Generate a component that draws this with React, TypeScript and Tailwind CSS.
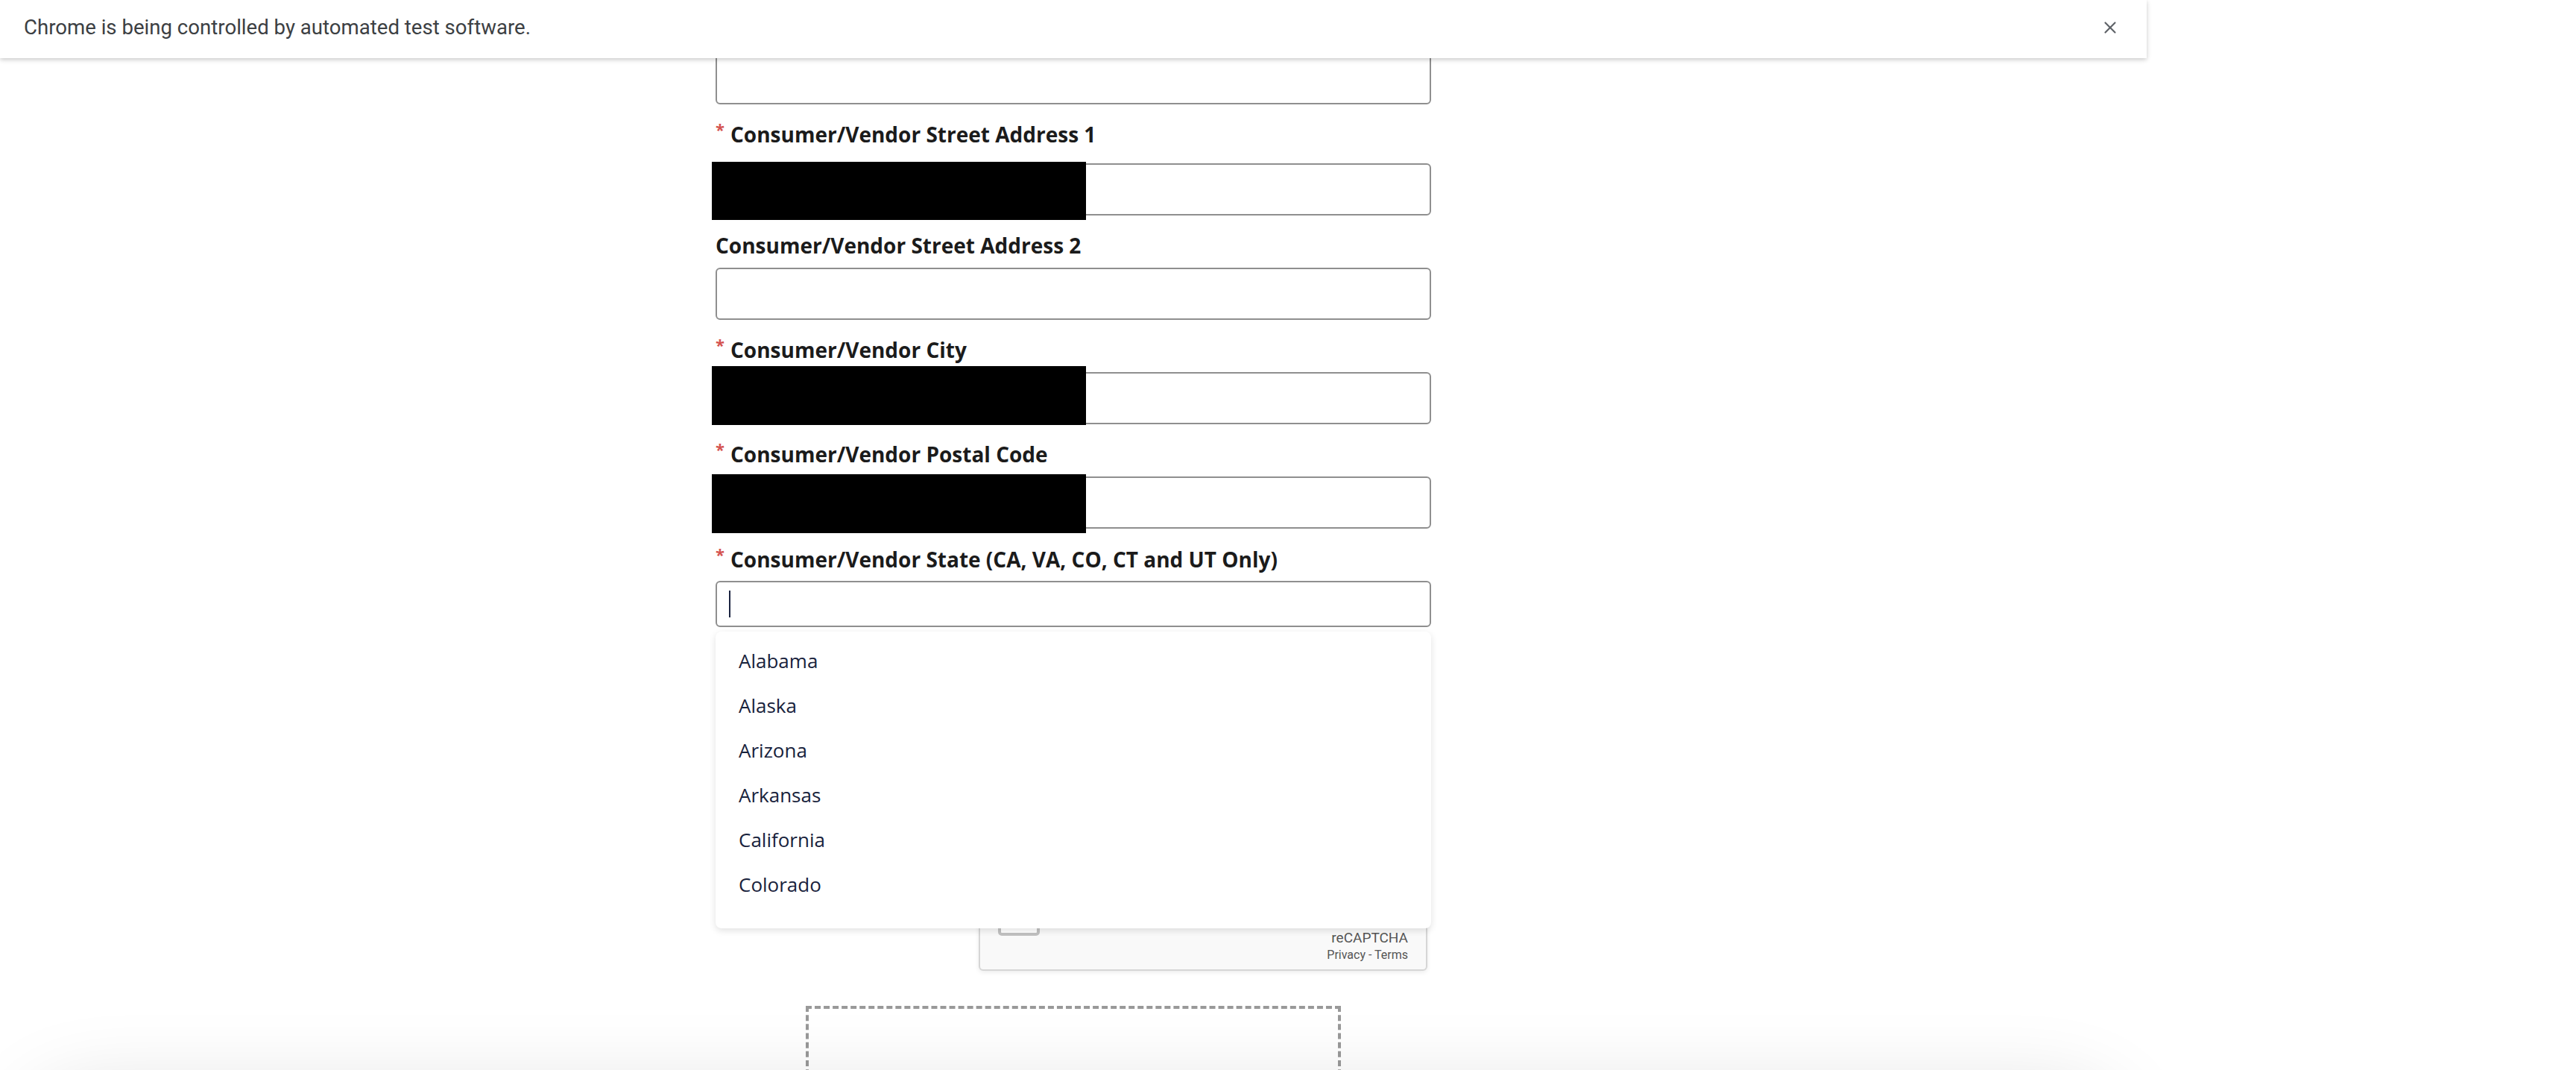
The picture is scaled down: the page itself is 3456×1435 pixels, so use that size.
import React from 'react';
import { X } from 'lucide-react';

const STATES = ['Alabama', 'Alaska', 'Arizona', 'Arkansas', 'California', 'Colorado'];

const labelCls =
  "flex items-start h-[36px] text-[28px] font-bold text-[#1b1b1b] whitespace-nowrap font-['Open_Sans',sans-serif]";
const inputCls = 'block w-full h-[70px] rounded-[6px] border-2 border-[#8f8f8f] bg-white outline-none';

const Star = () => (
  <span className="leading-[22px] text-[22px] text-[#d4534f] mr-[8px]">*</span>
);

// black box used to hide prefilled values
const Redacted = ({ top, height }: { top: string; height: string }) => (
  <div className={`absolute left-[-5px] w-[502px] bg-black ${top} ${height}`} />
);

const App: React.FC = () => {
  return (
    <div className="relative w-[3456px] h-[1435px] overflow-hidden bg-white">
      <div className="relative w-[2880px] h-[1435px]">
        {/* Automation info bar */}
        <div className="absolute top-0 left-0 z-30 w-[2880px] h-[78px] bg-white shadow-[0_2px_6px_rgba(0,0,0,0.22)] flex items-center justify-between pl-[32px] pr-[36px] pb-[5px]">
          <span className="text-[27.6px] text-[#3c4043] font-['Roboto',sans-serif]">
            Chrome is being controlled by automated test software.
          </span>
          <X size={26} strokeWidth={2} className="text-[#5f6368]" />
        </div>

        {/* Form column */}
        <div className="mx-auto w-[960px] pt-[70px]">
          <input className={inputCls} />

          <label className={`${labelCls} mt-[22px]`}>
            <Star />
            <span className="leading-[36px]">Consumer/Vendor Street Address 1</span>
          </label>
          <div className="relative mt-[21px]">
            <input className={inputCls} />
            <Redacted top="top-[-2px]" height="h-[78px]" />
          </div>

          <label className={`${labelCls} mt-[22px]`}>
            <span className="leading-[36px]">Consumer/Vendor Street Address 2</span>
          </label>
          <input className={`${inputCls} mt-[12px]`} />

          <label className={`${labelCls} mt-[22px]`}>
            <Star />
            <span className="leading-[36px]">Consumer/Vendor City</span>
          </label>
          <div className="relative mt-[12px]">
            <input className={inputCls} />
            <Redacted top="top-[-8px]" height="h-[79px]" />
          </div>

          <label className={`${labelCls} mt-[22px]`}>
            <Star />
            <span className="leading-[36px]">Consumer/Vendor Postal Code</span>
          </label>
          <div className="relative mt-[12px]">
            <input className={inputCls} />
            <Redacted top="top-[-3px]" height="h-[79px]" />
          </div>

          <label className={`${labelCls} mt-[23px]`}>
            <Star />
            <span className="leading-[36px]">Consumer/Vendor State (CA, VA, CO, CT and UT Only)</span>
          </label>
          <div className="relative mt-[11px]">
            <div className="h-[62px] rounded-[6px] border-2 border-[#8f8f8f] bg-white">
              <div className="ml-[16px] mt-[11px] w-[2px] h-[36px] bg-[#1c2541]" />
            </div>

            {/* open combobox list */}
            <div className="absolute left-0 top-[68px] z-20 w-full h-[398px] rounded-[8px] bg-white shadow-[0_3px_10px_rgba(0,0,0,0.12)] pt-[9px] font-['Open_Sans',sans-serif]">
              {STATES.map((s) => (
                <div key={s} className="h-[60px] leading-[60px] px-[31px] text-[26px] text-[#18223c]">
                  {s}
                </div>
              ))}
            </div>
          </div>

          {/* reCAPTCHA badge */}
          <div className="ml-[353px] mt-[305px] w-[602px] h-[156px] rounded-[6px] border-2 border-[#d6d6d6] bg-[#f9f9f9] shadow-[0_2px_6px_rgba(0,0,0,0.08)] flex justify-between pl-[24px] pr-[24px] font-['Roboto',sans-serif]">
            <div className="mt-[51px] w-[56px] h-[56px] rounded-[5px] border-[4px] border-[#c1c1c1] bg-white" />
            <div className="flex flex-col items-end justify-end pb-[8px] text-[#555]">
              <span className="text-[19px] leading-[24px]">reCAPTCHA</span>
              <span className="text-[16px] leading-[22px]">Privacy - Terms</span>
            </div>
          </div>

          <div className="mx-auto mt-[47px] w-[718px] h-[300px] border-4 border-dashed border-[#999]" />
        </div>

        {/* shadow of the sticky footer just below the viewport */}
        <div className="absolute left-[60px] top-[1490px] z-10 w-[2760px] h-[300px] rounded-[60px] bg-white shadow-[0_0_110px_30px_rgba(0,0,0,0.13)]" />
      </div>
    </div>
  );
};

export default App;
